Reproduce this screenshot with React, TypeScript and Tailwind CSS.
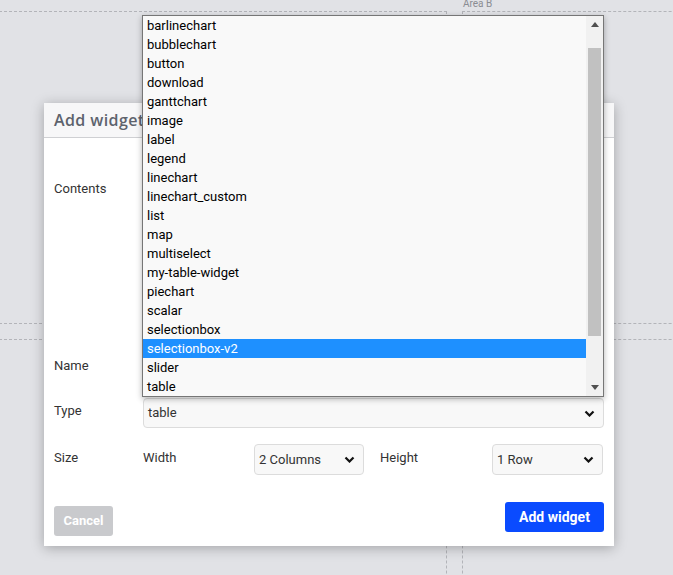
import React from "react";

const items = [
  "barlinechart", "bubblechart", "button", "download", "ganttchart", "image", "label", "legend",
  "linechart", "linechart_custom", "list", "map", "multiselect", "my-table-widget", "piechart",
  "scalar", "selectionbox", "selectionbox-v2", "slider", "table",
];

function Chevron() {
  return (
    <svg width="11" height="7" viewBox="0 0 11 7" className="shrink-0">
      <path d="M1.5 1.5 L5.5 5.5 L9.5 1.5" fill="none" stroke="#111" strokeWidth="2.2" />
    </svg>
  );
}

function FakeSelect({ value, className }: { value: string; className: string }) {
  return (
    <div className={`flex items-center justify-between border border-[#dcdcdc] rounded-[4px] bg-[#f8f8f8] pl-[4px] pr-[8px] text-[13px] text-[#333] ${className}`}>
      <span>{value}</span>
      <Chevron />
    </div>
  );
}

export default function App() {
  return (
    <div className="relative w-[673px] h-[575px] overflow-hidden bg-[#e1e2e6] font-['Roboto',sans-serif]">
      {/* dashboard areas */}
      <div className="grid grid-cols-[463px_260px] grid-rows-[324px_300px] gap-x-[15px] gap-y-[15px] -ml-4">
        <div className="flex flex-col">
          <div className="h-[11px]" />
          <div className="flex-1 border border-dashed border-[#b3b4b9]" />
        </div>
        <div className="flex flex-col">
          <div className="h-[11px] text-[10px] leading-[8px] text-[#8a8c92] pl-px">Area B</div>
          <div className="flex-1 border border-dashed border-[#b3b4b9]" />
        </div>
        <div className="border border-dashed border-[#b3b4b9]" />
        <div className="border border-dashed border-[#b3b4b9]" />
      </div>

      {/* dialog */}
      <div className="absolute left-[44px] top-[103px] w-[570px] h-[443px] bg-white shadow-[0_2px_12px_rgba(0,0,0,0.28)] flex flex-col">
        <div className="h-[35px] shrink-0 border-b border-[#cfd0d3] bg-[#f7f7f8] flex items-center px-[10px]">
          <span className="font-['Open_Sans',sans-serif] font-semibold text-[16px] tracking-[0.4px] text-[#5d636d]">Add widget</span>
        </div>
        <div className="flex flex-col px-[10px] pt-[43px] text-[13px] text-[#333]">
          <div className="flex h-[160px]">
            <div className="w-[89px] leading-[15px]">Contents</div>
            <div className="flex-1" />
          </div>
          <div className="flex items-center h-[30px] mt-[10px]">
            <div className="w-[89px]">Name</div>
            <div className="flex-1" />
          </div>
          <div className="flex items-center h-[30px] mt-[17px]">
            <div className="w-[89px] -mt-[4px]">Type</div>
            <FakeSelect value="table" className="flex-1 h-[30px]" />
          </div>
          <div className="flex items-center h-[31px] mt-[16px]">
            <div className="w-[89px] -mt-[3px]">Size</div>
            <div className="w-[111px] -mt-[3px]">Width</div>
            <FakeSelect value="2 Columns" className="w-[110px] h-[31px]" />
            <div className="w-[112px] ml-[16px] -mt-[3px]">Height</div>
            <FakeSelect value="1 Row" className="w-[111px] h-[31px]" />
          </div>
          <div className="flex justify-between items-start mt-[27px]">
            <button className="mt-[4px] h-[30px] w-[59px] rounded-[3px] bg-[#c9cacd] text-white font-bold text-[13px]">Cancel</button>
            <button className="h-[30px] w-[99px] rounded-[3px] bg-[#0a4bff] text-white font-bold text-[14px]">Add widget</button>
          </div>
        </div>
      </div>

      {/* open select list */}
      <div className="absolute left-[142px] top-[15px] w-[462px] h-[382px] border border-[#767676] bg-[#f9f9f9] shadow-[0_2px_6px_rgba(0,0,0,0.3)] flex">
        <div className="flex-1 flex flex-col">
          {items.map(it => (
            <div key={it}
              className={`h-[19px] leading-[19px] px-[4px] text-[13px] ${it === "selectionbox-v2" ? "bg-[#1e90ff] text-white" : "text-black"}`}>
              {it}
            </div>
          ))}
        </div>
        <div className="w-[17px] bg-[#f1f1f1] flex flex-col items-center">
          <div className="h-[17px] w-full flex items-center justify-center">
            <svg width="8" height="5" viewBox="0 0 8 5"><path d="M4 0 L8 5 L0 5 Z" fill="#505050" /></svg>
          </div>
          <div className="mt-[15px] h-[288px] w-[13px] bg-[#c1c1c1]" />
          <div className="flex-1" />
          <div className="h-[17px] w-full flex items-center justify-center">
            <svg width="8" height="5" viewBox="0 0 8 5"><path d="M0 0 L8 0 L4 5 Z" fill="#505050" /></svg>
          </div>
        </div>
      </div>
    </div>
  );
}
